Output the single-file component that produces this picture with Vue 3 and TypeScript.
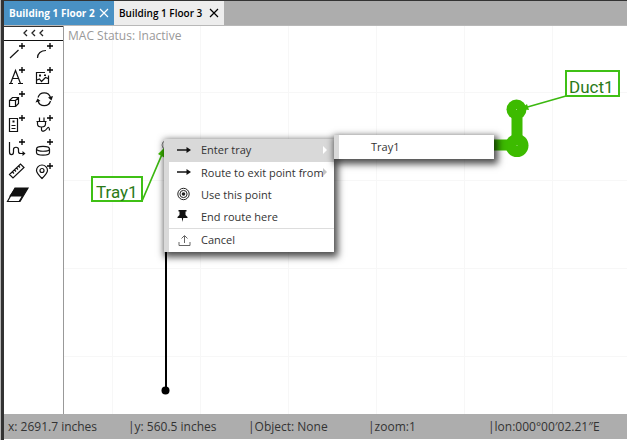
<script setup lang="ts">
import { ref } from 'vue'

interface Tool { name: string; plusX?: number; strokes: string; fills?: string }
interface MenuItem { label: string; icon: 'arrow' | 'target' | 'pin' | 'exit'; nested?: boolean; divided?: boolean }

const tabs = ['Building 1 Floor 2', 'Building 1 Floor 3']
const activeTab = ref(0)
const activeItem = ref(0)

const tools: Tool[] = [
  { name: 'Add line', plusX: 18, strokes: 'M6 17L14.5 9' },
  { name: 'Add arc', plusX: 20, strokes: 'M7.5 17C7.5 12.500 11 9.500 16 9.500' },
  { name: 'Add text', plusX: 18, strokes: 'M6.500 18.500L11.500 5.500L16.500 18.500M8.500 13.500H14.500M5 18.500H9M14 18.500H19' },
  { name: 'Add image', plusX: 20, strokes: 'M15 7.500H6.500V18.500H18.500V10.500M7 15L9.500 14L11.500 16.500L15.500 12.500L18 13.500', fills: 'M9 9.500h2v2h-2zM14 9.500h2v1.500h-2z' },
  { name: 'Add equipment', plusX: 18, strokes: 'M5.500 11.500H11.500V17.500H5.500ZM5.500 11.500L8.500 8.500H14.500V14.500L11.500 17.500M11.500 11.500L14.500 8.500' },
  { name: 'Refresh', strokes: 'M8 8.500A6.500 6.500 0 0 1 20.500 8.500M20.500 12A6.500 6.500 0 0 1 8 12', fills: 'M18 8.500L23 7L21.500 11.500ZM5.500 13.500L7.500 9.500L10.500 12Z' },
  { name: 'Add rack', plusX: 18, strokes: 'M5.500 5.500H13.500V18.500H5.500ZM7.500 12.500H11.500M7.500 15.500H11.500', fills: 'M8.500 7.500h2v2h-2z' },
  { name: 'Add plug', plusX: 20, strokes: 'M9.500 4.500V8M14 4.500V8M6.500 8.500H16.500M7.500 9V11C7.500 15 15.500 15 15.500 11V9M11.500 14V16.500C11.500 19.500 15.500 18 17 15.500C18.500 13.500 19.500 14.500 19.500 17.500' },
  { name: 'Add route', plusX: 18, strokes: 'M5.500 5V15C5.500 18.500 9.500 18.500 9.500 15V12.500C9.500 9.500 14.500 9.500 14.500 12.500V14.500C14.500 16 15 16.500 16.500 16.500H20', fills: 'M18.500 14L21.500 16.500L18.500 19Z' },
  { name: 'Add coil', plusX: 20, strokes: 'M6.500 12C6.500 8.500 19.500 8.500 19.500 12C19.500 15 6.500 15 6.500 12V15.500C6.500 19 19.500 19 19.500 15.500V12' },
  { name: 'Measure', strokes: 'M5.500 13.500L16.500 3L20 6.500L9 17ZM8.500 11L10 12.500M10.500 9L12 10.500M12.500 7L14 8.500M14.500 5L16 6.500' },
  { name: 'Add marker', plusX: 20, strokes: 'M12 17.500C9 14.500 6.500 12 6.500 9.500A5.500 5.500 0 0 1 17.500 9.500C17.500 12 15 14.500 12 17.500ZM14 9.500A2 2 0 1 1 10 9.500A2 2 0 1 1 14 9.500' },
  { name: 'Erase', strokes: 'M11 3H24L16 16.500H3.500Z', fills: 'M11 3H24L16 16.500H14.500L17.500 11.500H5Z' },
]

const gridX = [48, 136, 224, 312, 400, 488]
const gridY = [66, 154, 242, 330]

const menu: MenuItem[] = [
  { label: 'Enter tray', icon: 'arrow', nested: true },
  { label: 'Route to exit point from', icon: 'arrow', nested: true },
  { label: 'Use this point', icon: 'target' },
  { label: 'End route here', icon: 'pin' },
  { label: 'Cancel', icon: 'exit', divided: true },
]

const status = ['x: 2691.7 inches', '|y: 560.5 inches', '|Object: None', '|zoom:1', '|lon:000°00′02.21″E']
</script>

<template>
  <div class="app">
    <nav class="tabs">
      <div v-for="(tab, i) in tabs" :key="tab" class="tab" :class="{ active: i === activeTab }">
        <button class="tab-name" type="button" @click="activeTab = i">{{ tab }}</button>
        <button class="close" type="button" :aria-label="'Close ' + tab">
          <svg width="10" height="10" viewBox="0 0 10 10"><path d="M1 1L9 9M9 1L1 9" /></svg>
        </button>
      </div>
    </nav>
    <div class="work">
      <aside class="sidebar">
        <button class="collapse" type="button" aria-label="Collapse tools">
          <svg width="22" height="8" viewBox="0 0 22 8"><path d="M4 1L1 4L4 7M12 1L9 4L12 7M20 1L17 4L20 7" /></svg>
        </button>
        <div class="tools">
          <button v-for="tool in tools" :key="tool.name" class="tool" type="button" :aria-label="tool.name">
            <svg width="26" height="24" viewBox="0 0 26 24">
              <path class="line" :d="tool.strokes" />
              <path v-if="tool.fills" class="solid" :d="tool.fills" />
              <path v-if="tool.plusX" class="plus" :d="`M${tool.plusX - 3} 5h6M${tool.plusX} 2v6`" />
            </svg>
          </button>
        </div>
      </aside>
      <main class="canvas">
        <svg class="drawing" width="100%" height="100%">
          <g class="grid">
            <line v-for="x in gridX" :key="'x' + x" :x1="x + 0.5" y1="0" :x2="x + 0.5" y2="100%" />
            <line v-for="y in gridY" :key="'y' + y" x1="0" :y1="y + 0.5" x2="100%" :y2="y + 0.5" />
          </g>
          <path class="route" d="M102 120V364" />
          <circle class="route-end" cx="101.500" cy="364.500" r="4" />
          <circle class="route-start" cx="102" cy="119" r="4" />
          <path class="duct" d="M400 119H453V84" />
          <circle class="node" cx="452.500" cy="83.500" r="10" />
          <circle class="node" cx="453" cy="119.500" r="11.500" />
          <circle class="dot" cx="452.500" cy="83.500" r="0.5" />
          <circle class="dot" cx="453" cy="119.500" r="0.5" />
          <path class="leader" d="M502 70L460 82M78 175L99 126" />
          <path class="head" d="M457 83L463 78L465 84ZM101 121L94 128L101 132Z" />
          <rect class="tag" x="28" y="151" width="50" height="24" />
          <text class="tag-text" x="32" y="172">Tray1</text>
          <rect class="tag" x="502" y="45" width="53" height="25" />
          <text class="tag-text" x="505" y="67">Duct1</text>
        </svg>
        <div class="mac">MAC Status: Inactive</div>
        <div class="menu" role="menu">
          <button
            v-for="(item, i) in menu"
            :key="item.label"
            class="item"
            :class="{ current: i === activeItem, divided: item.divided }"
            type="button"
            role="menuitem"
            @mouseenter="activeItem = i"
          >
            <svg class="icon" width="16" height="16" viewBox="0 0 16 16">
              <g v-if="item.icon === 'arrow'">
                <path class="bold" d="M1 8H12" /><path class="solid" d="M10.500 5L15 8L10.500 11Z" />
              </g>
              <g v-else-if="item.icon === 'target'">
                <circle cx="7.500" cy="8" r="5.700" /><circle cx="7.500" cy="8" r="3.600" /><circle class="center" cx="7.500" cy="8" r="1.800" />
              </g>
              <path v-else-if="item.icon === 'pin'" class="solid" d="M2.500 2H10.500V3.500H9.500V7L11.500 9V10H7.200L6.500 14L5.800 10H1.500V9L3.500 7V3.500H2.500Z" />
              <path v-else class="thin" d="M3 10V13.500H14V10M8.500 11V4M5.500 6.500L8.500 3.500L11.500 6.500" />
            </svg>
            <span class="label">{{ item.label }}</span>
            <svg v-if="item.nested" class="more" width="5" height="8" viewBox="0 0 5 8"><path d="M0 0L4 4L0 8Z" /></svg>
          </button>
        </div>
        <div class="menu submenu" role="menu">
          <button class="item" type="button" role="menuitem"><span class="label">Tray1</span></button>
        </div>
      </main>
    </div>
    <footer class="status">
      <span v-for="entry in status" :key="entry">{{ entry }}</span>
    </footer>
  </div>
</template>

<style>
body {
  margin: 0;
}
</style>

<style scoped>
.app {
  box-sizing: border-box;
  display: flex;
  flex-direction: column;
  height: 100vh;
  padding-left: 1px;
  overflow: hidden;
  background: linear-gradient(to right, #b8b8b8 1px, #333 1px, #333 4px, #fff 4px);
  font-family: "Open Sans", "Noto Sans", sans-serif;
  font-size: 12px;
  color: #333;
}
button {
  margin: 0;
  padding: 0;
  border: 0;
  background: none;
  color: inherit;
  font: inherit;
}
svg {
  display: block;
  fill: none;
}
.tabs {
  display: flex;
  height: 24px;
  margin-left: 3px;
  border-top: 1px solid #333;
  border-bottom: 1px solid #b8b8b8;
  background: #adadad;
}
.tab {
  box-sizing: border-box;
  display: flex;
  align-items: center;
  justify-content: space-between;
  min-width: 110px;
  padding: 0 5px;
  background: #ededed;
  color: #000;
  font-size: 10px;
  font-weight: 600;
}
.tab.active {
  background: #4991c4;
  color: #fff;
  font-weight: 700;
}
.close path {
  stroke: currentColor;
  stroke-width: 1.2;
}
.work {
  display: flex;
  flex: 1;
  min-height: 0;
  margin-left: 3px;
}
.sidebar {
  flex: 0 0 59px;
  border-right: 1px solid #999;
  background: #fff;
}
.collapse {
  display: flex;
  align-items: center;
  justify-content: center;
  width: 100%;
  height: 15px;
  padding-bottom: 2px;
  border-top: 1px solid #333;
  border-bottom: 1px solid #111;
}
.collapse path {
  stroke: #222;
  stroke-width: 1.3;
}
.tools {
  display: grid;
  grid-template-columns: 26px 26px;
  grid-auto-rows: 24px;
}
.line {
  stroke: #111;
  stroke-width: 1.2;
}
.plus {
  stroke: #000;
  stroke-width: 1.3;
}
.solid {
  fill: #111;
}
.canvas {
  position: relative;
  flex: 1;
  min-width: 0;
  background: #fff;
}
.drawing {
  position: absolute;
  inset: 0;
}
.grid line {
  stroke: #f7f7f7;
}
.route {
  stroke: #000;
  stroke-width: 2;
}
.route-end {
  fill: #000;
}
.route-start {
  fill: #fff;
  stroke: #888;
}
.duct {
  stroke: #3dbb00;
  stroke-width: 11;
}
.node,
.head {
  fill: #3dbb00;
}
.dot {
  fill: #b9e8a0;
}
.leader {
  stroke: #3cb811;
  stroke-width: 1.7;
}
.tag {
  fill: #fff;
  stroke: #3fc015;
  stroke-width: 2;
}
.tag-text {
  fill: #2a7a17;
  font-family: Roboto, sans-serif;
  font-size: 17px;
}
.mac {
  position: relative;
  padding: 1px 4px;
  line-height: 17px;
  color: #999;
}
.menu {
  position: absolute;
  top: 113px;
  left: 100px;
  box-sizing: border-box;
  width: 170px;
  border-left: 5px solid #d9d9d9;
  background: #fff;
  box-shadow: 2px 3px 7px 2px rgba(0, 0, 0, 0.7);
  font-size: 11px;
}
.submenu {
  top: 109px;
  left: 270px;
  width: 160px;
}
.item {
  display: flex;
  align-items: center;
  position: relative;
  width: 100%;
  height: 22px;
  padding: 0 0 2px 7px;
  gap: 9px;
  text-align: left;
  white-space: nowrap;
}
.item.current {
  height: 23px;
  background: #d9d9d9;
}
.item.divided {
  height: 24px;
  border-top: 1px solid #ddd;
}
.submenu .item {
  height: 24px;
  padding-left: 32px;
}
.icon circle {
  stroke: #222;
  stroke-width: 1;
}
.icon .center {
  fill: #222;
  stroke: none;
}
.icon .bold {
  stroke: #222;
  stroke-width: 1.6;
}
.icon .thin {
  stroke: #666;
  stroke-width: 1;
}
.more {
  position: absolute;
  right: 6px;
  fill: #c4c4c4;
}
.current .more {
  fill: #fff;
}
.status {
  display: grid;
  grid-template-columns: 120px 120px 120px 120px auto;
  align-items: center;
  height: 25px;
  margin: 0 0 1px 3px;
  padding-left: 4px;
  background: #adadad;
  white-space: nowrap;
}
</style>
